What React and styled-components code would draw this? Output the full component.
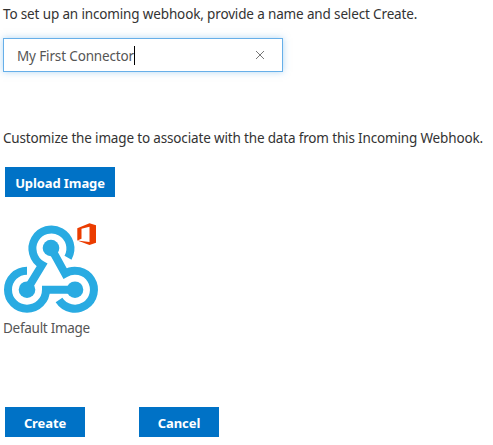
import React from "react";
import styled, { createGlobalStyle } from "styled-components";

const GlobalStyle = createGlobalStyle`
  * { box-sizing: border-box; }
  body { margin: 0; background: #fff; font-family: "Noto Sans", "Open Sans", sans-serif; }
`;

const Page = styled.main`
  width: 493px;
  height: 445px;
  padding: 4px 0 0 3px;
  overflow: hidden;
  display: flex;
  flex-direction: column;
  align-items: flex-start;
`;

const Label = styled.p`
  margin: 0;
  height: 20px;
  font-size: 13.5px;
  line-height: 20px;
  letter-spacing: ${(p) => p.$tracking || "-0.145px"};
  color: ${(p) => p.$color || "#333"};
  white-space: nowrap;
`;

const NameField = styled.div`
  display: flex;
  align-items: center;
  width: 280px;
  height: 34px;
  margin: 14px 0 56px;
  padding: 0 17px 0 13px;
  border: 1px solid #66afe9;
  box-shadow: 0 0 7px rgba(102, 175, 233, 0.5);
`;

const NameValue = styled(Label)`
  padding-top: 1px;
  height: 21px;
`;

const Caret = styled.span`
  width: 1px;
  height: 19px;
  margin-right: auto;
  background: #000;
`;

const Button = styled.button`
  width: ${(p) => p.$width}px;
  height: 30px;
  padding: 2px 0 0;
  border: 0;
  background: #0072c6;
  color: #fff;
  font: 700 13px/28px "Noto Sans", "Open Sans", sans-serif;
  letter-spacing: -0.1px;
  white-space: nowrap;
`;

const UploadRow = styled.div`
  margin: 19px 0 0 2px;
  height: 30px;
`;

const Picture = styled.svg`
  display: block;
  width: 100px;
  height: 100px;
  margin: 21px 0 0 -3px;
`;

const Actions = styled.div`
  display: flex;
  gap: 54px;
  margin: 69px 0 0 2px;
`;

function WebhookImage() {
  return (
    <Picture viewBox="0 218 100 100">
      <g fill="none" stroke="#29abe2" strokeWidth="8">
        <path d="M68 257.8A19 19 0 1 0 42 265L27 289.7" />
        <path d="M27 270.7A19 19 0 1 0 46 289.7H75" />
        <path d="M51 248L65 273.5A19 19 0 1 1 59 300" />
      </g>
      <g fill="#29abe2">
        <circle cx="51" cy="248" r="8.3" />
        <circle cx="27" cy="289.7" r="8.3" />
        <circle cx="75" cy="289.7" r="8.3" />
      </g>
      <path fill="#eb3c00" d="M77.3 228.2L89.5 223.3L96 225.2V242.8L89.5 245L77.3 240.5L89.5 241.9V226.8L81.5 228.8V238.8L77.3 240.5Z" />
    </Picture>
  );
}

export default function App() {
  return (
    <>
      <GlobalStyle />
      <Page>
        <Label>To set up an incoming webhook, provide a name and select Create.</Label>
        <NameField>
          <NameValue as="span" $color="#555">My First Connector</NameValue>
          <Caret />
          <svg width="10" height="10" viewBox="0 0 10 10" stroke="#777" strokeWidth="1">
            <path d="M1 1L9 9M9 1L1 9" />
          </svg>
        </NameField>
        <Label $tracking="-0.158px">Customize the image to associate with the data from this Incoming Webhook.</Label>
        <UploadRow>
          <Button $width={110}>Upload Image</Button>
        </UploadRow>
        <WebhookImage />
        <Label $color="#555" $tracking="-0.28px">Default Image</Label>
        <Actions>
          <Button $width={80}>Create</Button>
          <Button $width={80}>Cancel</Button>
        </Actions>
      </Page>
    </>
  );
}
